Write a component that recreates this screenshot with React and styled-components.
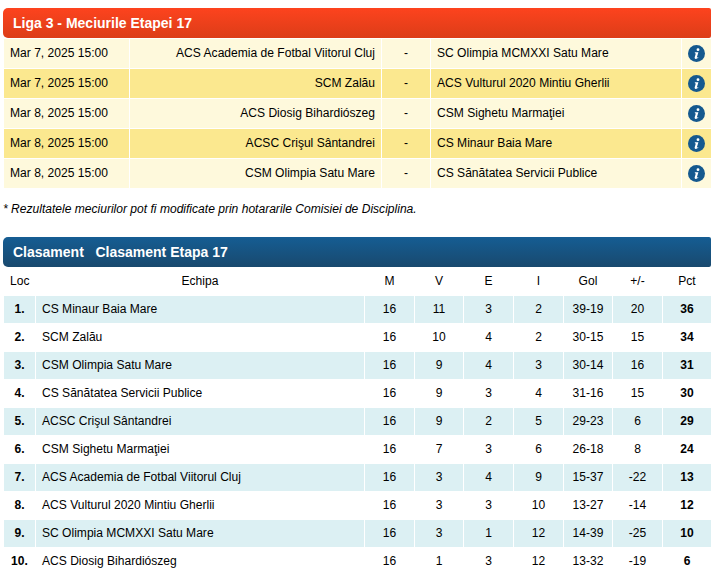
import React from "react";
import styled, { createGlobalStyle } from "styled-components";

const Global = createGlobalStyle`
  html, body { margin: 0; padding: 0; background: #fff; }
  body { font-family: "Liberation Sans", Arial, sans-serif; font-size: 12.07px; color: #000; }
`;
const Page = styled.div`
  width: 711px; height: 580px; overflow: hidden; box-sizing: border-box;
  padding: 8px 0 0 4px;
`;
const Panel = styled.section`
  display: flex; flex-direction: column;
`;
const Banner = styled.h2`
  margin: 0 0 0 -1px; height: 30px; box-sizing: border-box; padding-left: 10px;
  display: flex; align-items: center; white-space: pre;
  font-size: 14px; font-weight: 700; color: #fff;
  border-radius: 5px 2px 2px 5px;
  background: linear-gradient(to bottom, ${p => p.$from}, ${p => p.$to});
`;
const FixtureList = styled.div`
  display: grid; grid-template-columns: 125px 251px 48px 250px 29px;
  column-gap: 1px; row-gap: 1px; margin-top: 1px;
  grid-auto-rows: 29px;
`;
const FixtureCell = styled.div`
  display: flex; align-items: center; box-sizing: border-box;
  justify-content: ${p => p.$align || "flex-start"};
  padding: ${p => p.$pad || "0 6px 1px"};
  background: ${p => (p.$alt ? "#fbe88f" : "#fef9dc")};
  white-space: nowrap;
`;
const Note = styled.p`
  margin: 0 0 0 -1px; height: 49px; padding-top: 14px; box-sizing: border-box;
  font-style: italic; line-height: 14px;
`;
const Standings = styled.div`
  display: grid;
  grid-template-columns: 31px 328px 49px 48px 49px 49px 48px 49px 48px;
  grid-template-rows: 28px;
  column-gap: 1px; row-gap: 1px;
  grid-auto-rows: 27px;
`;
const HeadCell = styled.div`
  display: flex; align-items: center; justify-content: center;
`;
const LocHead = styled(HeadCell)`justify-content: flex-start; padding-left: 6px;`;
const Cell = styled.div`
  display: flex; align-items: center; box-sizing: border-box;
  justify-content: ${p => (p.$left ? "flex-start" : "center")};
  padding: 0 0 1px ${p => (p.$left ? "6px" : "0")};
  font-weight: ${p => (p.$bold ? 700 : 400)};
  background: ${p => (p.$alt ? "#dcf0f3" : "#fff")};
  white-space: nowrap;
`;

const InfoIcon = () => (
  <svg width="17" height="17" viewBox="0 0 18 18" aria-hidden="true">
    <circle cx="9" cy="9" r="9" fill="#15598f" />
    <circle cx="10.6" cy="4.9" r="1.5" fill="#fff" />
    <path d="M7.2 7.7h3.8l-1.6 5.3c-.1.4.2.5.5.3l.8-.6.3.5c-.9 1-1.7 1.5-2.8 1.5-1 0-1.4-.6-1.1-1.6l1-3.6c.1-.5-.1-.7-.8-.8z" fill="#fff" />
  </svg>
);

const fixtures = [
  ["Mar 7, 2025 15:00", "ACS Academia de Fotbal Viitorul Cluj", "SC Olimpia MCMXXI Satu Mare"],
  ["Mar 7, 2025 15:00", "SCM Zalău", "ACS Vulturul 2020 Mintiu Gherlii"],
  ["Mar 8, 2025 15:00", "ACS Diosig Bihardiószeg", "CSM Sighetu Marmaţiei"],
  ["Mar 8, 2025 15:00", "ACSC Crişul Sântandrei", "CS Minaur Baia Mare"],
  ["Mar 8, 2025 15:00", "CSM Olimpia Satu Mare", "CS Sănătatea Servicii Publice"],
];
const table = [
  ["CS Minaur Baia Mare", 16, 11, 3, 2, "39-19", 20, 36],
  ["SCM Zalău", 16, 10, 4, 2, "30-15", 15, 34],
  ["CSM Olimpia Satu Mare", 16, 9, 4, 3, "30-14", 16, 31],
  ["CS Sănătatea Servicii Publice", 16, 9, 3, 4, "31-16", 15, 30],
  ["ACSC Crişul Sântandrei", 16, 9, 2, 5, "29-23", 6, 29],
  ["CSM Sighetu Marmaţiei", 16, 7, 3, 6, "26-18", 8, 24],
  ["ACS Academia de Fotbal Viitorul Cluj", 16, 3, 4, 9, "15-37", -22, 13],
  ["ACS Vulturul 2020 Mintiu Gherlii", 16, 3, 3, 10, "13-27", -14, 12],
  ["SC Olimpia MCMXXI Satu Mare", 16, 3, 1, 12, "14-39", -25, 10],
  ["ACS Diosig Bihardiószeg", 16, 1, 3, 12, "13-32", -19, 6],
];

export default function App() {
  return (
    <Page>
      <Global />
      <Panel>
        <Banner $from="#fd431e" $to="#dc3d18">Liga 3 - Meciurile Etapei 17</Banner>
        <FixtureList>
          {fixtures.map(([date, home, away], i) => {
            const alt = i % 2 === 1;
            return (
              <React.Fragment key={i}>
                <FixtureCell $alt={alt}>{date}</FixtureCell>
                <FixtureCell $alt={alt} $align="flex-end">{home}</FixtureCell>
                <FixtureCell $alt={alt} $align="center">-</FixtureCell>
                <FixtureCell $alt={alt}>{away}</FixtureCell>
                <FixtureCell $alt={alt} $align="center" $pad="0 0 1px"><InfoIcon /></FixtureCell>
              </React.Fragment>
            );
          })}
        </FixtureList>
      </Panel>
      <Note>* Rezultatele meciurilor pot fi modificate prin hotararile Comisiei de Disciplina.</Note>
      <Panel>
        <Banner $from="#155d93" $to="#19496e">{"Clasament   Clasament Etapa 17"}</Banner>
        <Standings>
          <LocHead>Loc</LocHead>
          <HeadCell>Echipa</HeadCell>
          {["M", "V", "E", "I", "Gol", "+/-", "Pct"].map(h => <HeadCell key={h}>{h}</HeadCell>)}
          {table.map(([team, ...stats], i) => {
            const alt = i % 2 === 0;
            return (
              <React.Fragment key={team}>
                <Cell $alt={alt} $bold>{i + 1}.</Cell>
                <Cell $alt={alt} $left>{team}</Cell>
                {stats.map((s, j) => (
                  <Cell key={j} $alt={alt} $bold={j === stats.length - 1}>{s}</Cell>
                ))}
              </React.Fragment>
            );
          })}
        </Standings>
      </Panel>
    </Page>
  );
}
